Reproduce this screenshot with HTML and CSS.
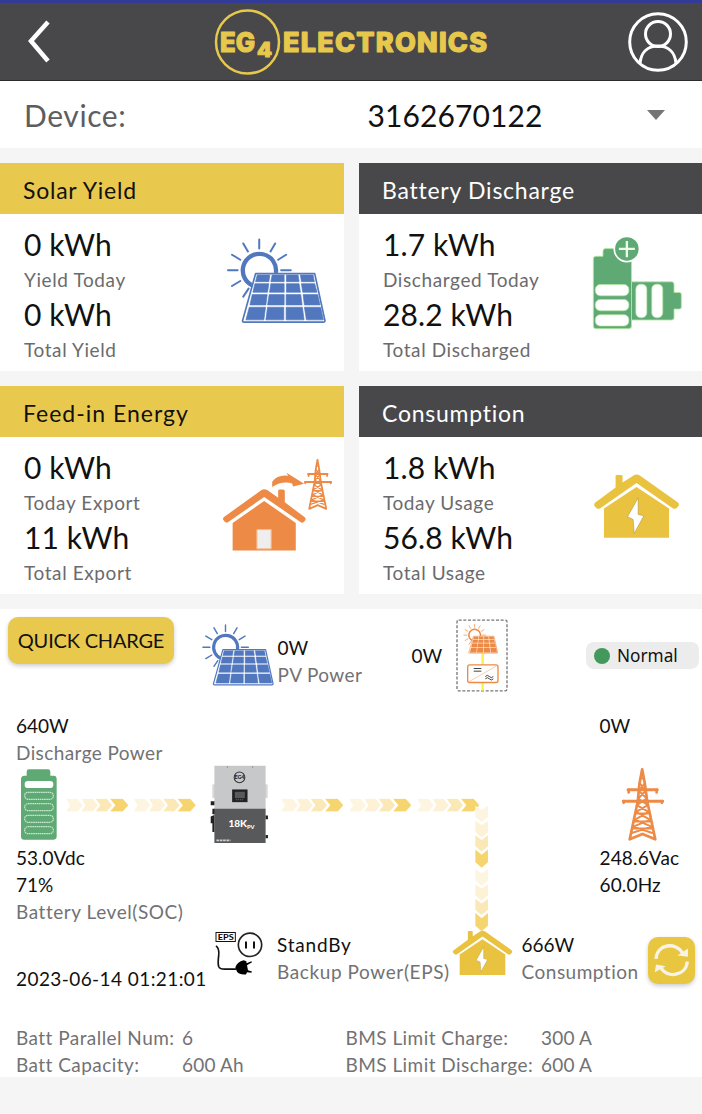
FILE: index.html
```html
<!DOCTYPE html>
<html lang="en">
<head>
<meta charset="utf-8">
<title>EG4 Electronics</title>
<link rel="stylesheet" href="styles.css">
</head>
<body>
<svg class="defs" width="0" height="0" aria-hidden="true">
  <symbol id="sun-panel" viewBox="36 38 298 258">
    <g fill="none" stroke="currentColor" stroke-width="6" stroke-linecap="round">
      <path d="M133 42V69M85 54L99 78M181 54L167 78M51 88L76 103M214 88L190 103M39 135H68M199 135H228M51 182L76 167M85 214L101 190"/>
      <path stroke-width="13" stroke-linecap="butt" d="M116 182A50 50 0 1 1 183 143"/>
    </g>
    <path fill="#fff" stroke="currentColor" stroke-width="5" stroke-linejoin="round" d="M122 145H300L331 287Q331 291 327 291H87Q82 291 83 286Z"/>
    <path fill="currentColor" stroke="currentColor" stroke-width="2" d="M127 149H165L162 169H122ZM172 149H208V169H168ZM215 149H250L253 169H215ZM257 149H295L299 169H260ZM120 175H162L158 201H114ZM168 175H208V201H164ZM215 175H253L257 201H215ZM260 175H300L307 201H264ZM112 208H157L153 239H105ZM163 208H208V239H158ZM214 208H258L262 239H214ZM265 208H309L316 239H269ZM103 246H152L147 284H93ZM158 246H207V284H153ZM214 246H263L268 284H214ZM269 246H318L326 284H275Z"/>
  </symbol>
  <symbol id="house" viewBox="40 42 262 194">
    <g fill="#e9c340">
      <path d="M73 145L171 80L269 145V233H73Z"/>
      <path d="M108 47Q108 44 111 44H126Q129 44 129 47V67L162 46Q171 40 181 46L296 127Q301 132 297 138L291 144Q286 148 280 144L171 68L62 144Q56 148 51 144L45 138Q41 132 47 127L108 82Z"/>
    </g>
    <path fill="#fff" stroke="#a98b3a" stroke-width="1.5" d="M176 113L144 170L161 178L164 220L193 167L176 163Z"/>
  </symbol>
  <symbol id="tower" viewBox="97 24 125 218" preserveAspectRatio="none">
    <g fill="none" stroke="#ed8a46" stroke-width="8" stroke-linejoin="round" stroke-linecap="round">
      <path d="M157 28L149 70L144 123L120 237L158 221L196 237L172 123L165 70Z"/>
      <path stroke-width="9" d="M115 89H202M101 123H218"/>
      <path stroke-width="8" d="M117 89V97M200 89V97M102 123V128M216 123V128"/>
      <path stroke-width="6" d="M150 70L168 92L145 115L174 135L139 155L180 178L131 199L187 218M165 70L147 92L171 115L141 135L176 155L136 178L185 199L126 218M140 160H176M132 184H182M128 205H189M152 55H162"/>
    </g>
  </symbol>
  <symbol id="chevrons" viewBox="0 0 187 40">
    <path fill="#fdf5df" d="M0 1H34L50 20L34 39H0L12 20Z"/>
    <path fill="#fdf2d6" d="M46 1H79L95 20L79 39H46L58 20Z"/>
    <path fill="#fae8b6" d="M89 1H122L138 20L122 39H89L103 20Z"/>
    <path fill="#f6d571" d="M132 1H170L187 20L170 39H132L148 20Z"/>
  </symbol>
</svg>

<header class="topbar">
  <svg class="back" viewBox="0 0 24 43"><path d="M21 2L4 21L21 41"/></svg>
  <svg class="logo" viewBox="0 0 276 68">
    <circle cx="33.500" cy="34" r="31.500"/>
    <text x="6" y="43.500" font-size="27" textLength="35" lengthAdjust="spacingAndGlyphs">EG</text>
    <text x="43" y="48.500" font-size="20" textLength="15" lengthAdjust="spacingAndGlyphs">4</text>
    <text x="69" y="43.500" font-size="27" textLength="204" lengthAdjust="spacing">ELECTRONICS</text>
  </svg>
  <svg class="user" viewBox="0 0 60 60"><circle cx="30" cy="30" r="28.300"/><ellipse cx="30" cy="22" rx="12.500" ry="12.500"/><path d="M12 51C13 41 19 34 30 34S47 41 48 51"/></svg>
</header>

<section class="device">
  <span class="device-label">Device:</span>
  <span class="device-id">3162670122</span>
  <span class="caret"></span>
</section>

<main>
  <section class="cards">
    <article class="card">
      <h2 class="card-title gold">Solar Yield</h2>
      <div class="card-body">
        <div><p class="big">0 kWh</p><p class="small">Yield Today</p><p class="big">0 kWh</p><p class="small">Total Yield</p></div>
        <svg class="icon-solar"><use href="#sun-panel"/></svg>
      </div>
    </article>
    <article class="card">
      <h2 class="card-title dark">Battery Discharge</h2>
      <div class="card-body">
        <div><p class="big">1.7 kWh</p><p class="small">Discharged Today</p><p class="big">28.2 kWh</p><p class="small">Total Discharged</p></div>
        <svg class="icon-battery" viewBox="36 30 274 284">
          <g fill="#5fa975" stroke="#b5e8a0" stroke-width="2.500">
            <path d="M155 170H276Q283 170 283 178V202H299Q305 202 305 208V246Q305 252 299 252H283V278Q283 285 276 285H155Z"/>
            <path d="M40 101Q40 93 48 93H69V78Q69 70 77 70H119Q127 70 127 78V93H146Q155 93 155 101V303Q155 311 147 311H48Q40 311 40 303Z"/>
            <circle cx="141" cy="71" r="38" stroke="#fff" stroke-width="5"/>
          </g>
          <g fill="#fff" stroke="#b5e8a0" stroke-width="2"><rect x="46" y="178" width="101" height="34" rx="15"/><rect x="46" y="223" width="101" height="34" rx="15"/><rect x="46" y="269" width="101" height="34" rx="15"/><rect x="168" y="177" width="33" height="101" rx="15"/><rect x="216" y="177" width="33" height="101" rx="15"/></g>
          <path d="M141 47V96M117 71H165" stroke="#effbe9" stroke-width="7"/>
        </svg>
      </div>
    </article>
    <article class="card">
      <h2 class="card-title gold feed-title">Feed-in Energy</h2>
      <div class="card-body">
        <div><p class="big">0 kWh</p><p class="small">Today Export</p><p class="big">11 kWh</p><p class="small">Total Export</p></div>
        <svg class="icon-feed" viewBox="20 24 334 282">
          <g fill="#ed8a46">
            <path d="M52 219L147 153L242 219V302H52Z"/>
            <path d="M139 120Q147 115 156 120L189 143V122Q189 118 194 118H204Q209 118 209 123V157L269 202Q274 207 270 212L265 217Q261 220 256 216L147 141L39 216Q34 220 29 216L24 210Q21 206 26 201Z"/>
            <path d="M171 95Q187 73 219 77L214 68L267 101L234 109L231 100Q200 92 171 111Z"/>
          </g>
          <path fill="#eee" stroke="#f6b98c" stroke-width="3" d="M125 239H168V297H125Z"/>
          <use href="#tower" x="267" y="26" width="84" height="154"/>
        </svg>
      </div>
    </article>
    <article class="card">
      <h2 class="card-title dark">Consumption</h2>
      <div class="card-body">
        <div><p class="big">1.8 kWh</p><p class="small">Today Usage</p><p class="big">56.8 kWh</p><p class="small">Total Usage</p></div>
        <svg class="icon-house"><use href="#house"/></svg>
      </div>
    </article>
  </section>

  <section class="panel">
    <div class="status-row">
      <button class="quick">QUICK CHARGE</button>
      <svg class="pv-icon"><use href="#sun-panel"/></svg>
      <div class="pair pv-text"><p>0W</p><p class="muted">PV Power</p></div>
      <p class="ac-value">0W</p>
      <svg class="ac-icon" viewBox="0 0 156 218">
        <rect x="3" y="3" width="150" height="212" rx="5" fill="none" stroke="#777" stroke-width="4" stroke-dasharray="9 5"/>
        <path d="M80 103V137M80 190V215" stroke="#faf04a" stroke-width="7"/>
        <use href="#sun-panel" x="22" y="13" width="104" height="92" color="#ed8a46"/>
        <rect x="35" y="137" width="91" height="53" rx="6" fill="#fff" stroke="#ed8a46" stroke-width="4"/>
        <path d="M40 187L122 140" stroke="#f3b58a" stroke-width="2"/>
        <path d="M53 148H76M53 156H76M88 172q6-7 12 0t12 0M88 179q6-7 12 0t12 0" fill="none" stroke="#444" stroke-width="3"/>
      </svg>
      <div class="badge"><span class="dot"></span>Normal</div>
    </div>

    <div class="diagram">
      <svg class="links" viewBox="0 0 702 320">
        <use href="#chevrons" x="66" y="99.500" width="62.500" height="13.300"/>
        <use href="#chevrons" x="133.500" y="99.500" width="62.500" height="13.300"/>
        <use href="#chevrons" x="281" y="99.500" width="62.500" height="13.300"/>
        <use href="#chevrons" x="349" y="99.500" width="62.500" height="13.300"/>
        <use href="#chevrons" x="417" y="99.500" width="62.500" height="13.300"/>
        <use href="#chevrons" width="62.500" height="13.300" transform="translate(488.300 106.500) rotate(90)"/>
        <use href="#chevrons" width="62.500" height="13.300" transform="translate(488.300 170) rotate(90)"/>
      </svg>
      <div class="node pair discharge"><p>640W</p><p class="muted">Discharge Power</p></div>
      <svg class="node cell" viewBox="64 26 108 213">
        <path fill="#5fa975" d="M64 57Q64 46 74 46H81V34Q81 27 88 27H145Q152 27 152 34V46H162Q171 46 171 56V228Q171 238 162 238H74Q64 238 64 229Z"/>
        <rect x="75" y="62" width="86" height="21" rx="10" fill="#fff"/>
        <g fill="none" stroke="#c8e6ce" stroke-width="3.500" stroke-dasharray="5 1.500"><rect x="75" y="96" width="86" height="21" rx="10"/><rect x="75" y="130" width="86" height="21" rx="10"/><rect x="75" y="165" width="86" height="21" rx="10"/><rect x="75" y="199" width="86" height="21" rx="10"/></g>
      </svg>
      <div class="node pair soc"><p>53.0Vdc</p><p>71%</p><p class="muted soc-label">Battery Level(SOC)</p></div>
      <svg class="node inverter" viewBox="630 16 176 236">
        <path d="M638 75H644V113H638ZM795 75H801V113H795Z" fill="#ddd" stroke="#aaa"/>
        <path fill="#c7c8ca" d="M643 18H796V148H643Z"/><path fill="#58595b" d="M643 147H796V249H643Z"/>
        <circle cx="718" cy="53" r="16" fill="none" stroke="#333" stroke-width="3"/>
        <text x="718" y="59" text-anchor="middle" font-size="16" font-weight="900" fill="#222">EG4</text>
        <path fill="#222" d="M696 89H742V127H696Z"/><path fill="#58595b" d="M704 96H734V115H704Z"/>
        <path d="M707 120H731" stroke="#777" stroke-width="3" stroke-dasharray="3 3"/>
        <path fill="#222" d="M632 124H643V136H632ZM637 147H644V163H637ZM632 170L643 165V216H637V190H632ZM796 167H803V178H796ZM796 225H803V235H796Z"/>
        <text x="685" y="202" font-size="30" font-weight="900" fill="#fff">18K<tspan dy="5" font-size="17">PV</tspan></text>
        <path d="M649 241H691" stroke="#ccc" stroke-width="5" stroke-dasharray="8 2"/>
        <path d="M680 22H684M755 22H759" stroke="#777" stroke-width="3"/>
      </svg>
      <p class="node grid-power">0W</p>
      <svg class="node pylon"><use href="#tower"/></svg>
      <div class="node pair grid-text"><p>248.6Vac</p><p>60.0Hz</p></div>
      <svg class="node eps" viewBox="46 34 144 134">
        <rect x="49" y="38" width="58" height="27" fill="none" stroke="#111" stroke-width="3"/>
        <text x="54" y="60" font-size="23" font-weight="700" textLength="48" lengthAdjust="spacingAndGlyphs">EPS</text>
        <circle cx="151" cy="75" r="35" fill="none" stroke="#222" stroke-width="5"/>
        <path d="M139 65V86M163 65V86" stroke="#111" stroke-width="6"/>
        <path d="M49 78Q60 86 57 108T57 140Q61 149 79 148H110" fill="none" stroke="#111" stroke-width="5"/>
        <path d="M107 142Q113 126 132 121L140 124L141 130L155 124L157 127L142 136L145 151L157 155L155 159L142 157L139 164Q120 166 112 156Z"/>
      </svg>
      <div class="node pair backup"><p class="standby">StandBy</p><p class="muted">Backup Power(EPS)</p></div>
      <p class="node stamp">2023-06-14 01:21:01</p>
      <svg class="node load"><use href="#house"/></svg>
      <div class="node pair usage"><p>666W</p><p class="muted">Consumption</p></div>
      <button class="node refresh" aria-label="Refresh">
        <svg viewBox="0 0 140 140"><path d="M24 65C26 21 83 13 103 48M117 73C114 115 57 126 38 91" fill="none" stroke="#f7f3e8" stroke-width="10"/><path fill="#f7f3e8" d="M119 34V59L88 55ZM20 105L24 82L53 87Z"/></svg>
      </button>
    </div>

    <dl class="stats">
      <dt>Batt Parallel Num:</dt><dd>6</dd><dt>BMS Limit Charge:</dt><dd>300 A</dd>
      <dt>Batt Capacity:</dt><dd>600 Ah</dd><dt>BMS Limit Discharge:</dt><dd>600 A</dd>
    </dl>
  </section>
</main>
</body>
</html>
```
FILE: styles.css
```css
* { box-sizing: border-box; margin: 0; padding: 0; }
body { background: #f5f5f6; font-family: Lato, "Open Sans", sans-serif; font-variant-ligatures: none; color: #111; width: 702px; height: 1114px; overflow: hidden; }
svg { display: block; flex: none; }
.defs { position: absolute; }
button { border: 0; font: inherit; color: inherit; }

.topbar { height: 81px; background: #48474a; border-top: 3px solid #333b98; border-bottom: 1px solid #2d2c2e; display: flex; align-items: center; padding: 0 14px 0 27px; }
.back { width: 24px; height: 43px; }
.back path { fill: none; stroke: #fff; stroke-width: 4.5; }
.logo { width: 276px; height: 68px; margin-left: 162.500px; }
.logo circle { fill: none; stroke: #e6c84c; stroke-width: 2.500; }
.logo text { fill: #e6c84c; stroke: #e6c84c; stroke-width: 1.200; stroke-linejoin: round; font-family: Inter, sans-serif; font-weight: 800; }
.user { width: 60px; height: 60px; margin-left: auto; }
.user * { fill: none; stroke: #fff; stroke-width: 3; }

.device { height: 67px; background: #fff; display: flex; align-items: center; padding: 0 37px 0 24px; font-size: 30px; }
.device-label { color: #5d5d5f; width: 343.500px; letter-spacing: .6px; }
.device-id { letter-spacing: .1px; }
.caret { margin-left: auto; border: 9px solid transparent; border-top: 10px solid #757575; border-bottom: 0; }

.cards { padding-top: 15px; display: grid; grid-template-columns: 344px 343px; gap: 15px; }
.card { height: 208px; background: #fff; }
.card-title { height: 51px; padding: 3px 0 0 23px; line-height: 48px; font-size: 23px; font-weight: 400; letter-spacing: .75px; }
.feed-title { letter-spacing: 1px; }
.gold { background: #e9c94d; }
.dark { background: #48474a; color: #fff; }
.card-body { display: flex; justify-content: space-between; align-items: flex-start; padding: 13px 0 0 24px; line-height: 35px; }
.big { font-size: 30px; letter-spacing: .1px; }
.small { font-size: 19px; color: #6b6b6d; letter-spacing: .6px; }
.icon-solar { width: 99px; height: 86px; margin: 11px 18px 0 0; color: #5178bf; }
.icon-battery { width: 91px; height: 95px; margin: 8px 19px 0 0; }
.icon-feed { width: 111px; height: 94px; margin: 8px 11px 0 0; }
.icon-house { width: 87px; height: 65px; margin: 24px 22px 0 0; }

.panel { margin-top: 15px; height: 468px; background: #fff; font-size: 19px; line-height: 27px; }
.muted, .stats { color: #727274; }
.muted { letter-spacing: .4px; }
.status-row { height: 90px; display: flex; align-items: flex-start; padding: 8px 3px 0 8px; }
.quick { width: 166px; height: 47px; border-radius: 10px; background: #e9c94d; font-size: 20px; letter-spacing: -.2px; box-shadow: 0 2px 4px #0003; white-space: nowrap; }
.pv-icon { width: 72px; height: 62px; margin: 7px 0 0 28px; color: #5178bf; }
.pv-text { margin: 17px 0 0 3.500px; width: 134px; }
.ac-value { margin-top: 25px; width: 44.500px; }
.ac-icon { width: 52px; height: 73px; margin-top: 2px; }
.badge { width: 113px; height: 27px; margin: 25px 0 0 auto; border-radius: 8px; background: #ececed; display: flex; align-items: center; padding-left: 8px; gap: 7px; font-family: "Noto Sans", sans-serif; font-size: 17.200px; }
.dot { width: 16px; height: 16px; border-radius: 50%; background: #43995b; }

.diagram { position: relative; height: 321px; white-space: nowrap; }
.links { position: absolute; left: 0; top: 0; width: 702px; height: 320px; }
.node { position: absolute; }
.discharge { left: 16px; top: 13px; }
.cell { left: 21px; top: 70px; width: 36px; height: 71px; }
.soc { left: 16px; top: 145px; }
.soc-label { letter-spacing: .55px; }
.inverter { left: 210px; top: 66px; width: 59px; height: 79px; }
.grid-power { left: 599.500px; top: 13px; }
.pylon { left: 622px; top: 69px; width: 42px; height: 73px; }
.grid-text { left: 599.500px; top: 145px; letter-spacing: .15px; }
.eps { left: 215px; top: 232px; width: 48px; height: 45px; }
.backup { left: 277px; top: 232px; }
.backup .muted { letter-spacing: .6px; }
.standby { letter-spacing: .8px; }
.stamp { left: 16px; top: 266px; letter-spacing: .42px; }
.load { left: 452px; top: 231px; width: 61px; height: 46px; }
.usage { left: 521.500px; top: 232px; }
.usage .muted { letter-spacing: .5px; }
.refresh { left: 648px; top: 238px; width: 47px; height: 47px; border-radius: 10px; background: #e9c63f; box-shadow: 0 2px 4px #0003; }
.refresh svg { width: 47px; height: 47px; }

.stats { display: grid; grid-template-columns: 166px 163.500px 195.500px 1fr; padding: 4px 0 0 16px; }
.stats dt { letter-spacing: .45px; }
.stats dd { letter-spacing: .2px; }
```
